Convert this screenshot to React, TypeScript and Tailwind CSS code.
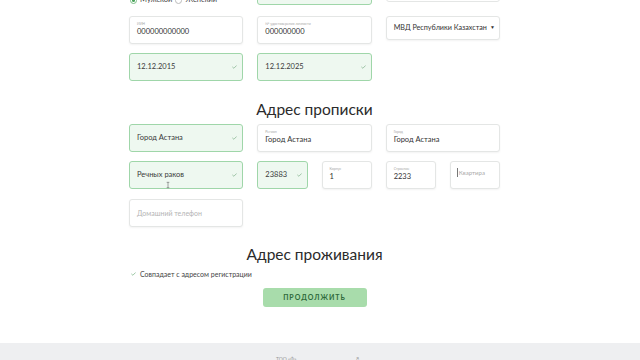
import React from "react";

type FieldProps = {
	label?: string;
	value?: string;
	placeholder?: string;
	green?: boolean;
	className?: string;
	children?: React.ReactNode;
};

function Check({ className = "" }: { className?: string }) {
	return (
		<svg viewBox="0 0 8 6" className={className} fill="none">
			<polyline points="1,3.2 3,5 7,1" stroke="currentColor" strokeWidth="1.1" strokeLinecap="round" strokeLinejoin="round" />
		</svg>
	);
}

function Field({ label, value, placeholder, green, className = "", children }: FieldProps) {
	if (green) {
		return (
			<div className={`relative h-[28px] rounded-[3px] border border-[#9fd6a9] bg-[#eef8f0] flex items-center pl-[7px] pr-[5px] ${className}`}>
				<span className="text-[7.5px] text-[#3a3a3a] flex-1 truncate">{value}</span>
				<Check className="w-[5px] h-[4px] text-[#7cae86]" />
				{children}
			</div>
		);
	}
	return (
		<div className={`relative h-[28px] rounded-[3px] border border-[#e4e6e5] bg-white shadow-[0_1px_2px_rgba(0,0,0,0.05)] flex flex-col justify-center pl-[7px] ${className}`}>
			{label && <span className="text-[3.5px] leading-[5px] text-[#a8a8a8] -mt-[2px]">{label}</span>}
			{value && <span className="text-[7.5px] leading-[10px] text-[#333]">{value}</span>}
			{placeholder && <span className="text-[7px] text-[#b4b4b4]">{placeholder}</span>}
			{children}
		</div>
	);
}

export default function App() {
	return (
		<div className="w-[640px] h-[360px] overflow-hidden bg-white font-['Lato',sans-serif] flex flex-col">
			<div className="w-[371px] ml-[129px] -mt-[23px] flex flex-col">
				{/* gender / document row */}
				<div className="grid grid-cols-6 gap-x-[14px] h-[28px]">
					<div className="col-span-2 flex items-end pb-[1px] pl-[1px] gap-[3px] text-[7.5px] leading-[8px] text-[#444]">
						<span className="w-[7px] h-[7px] rounded-full border border-[#7cbf88] flex items-center justify-center">
							<span className="w-[3px] h-[3px] rounded-full bg-[#4aa35b]" />
						</span>
						<span>Мужской</span>
						<span className="w-[7px] h-[7px] rounded-full border border-[#bbb]" />
						<span>Женский</span>
					</div>
					<Field green value="" className="col-span-2" />
					<div className="col-span-2 h-[25px] rounded-[3px] border border-[#e4e6e5] bg-white" />
				</div>

				<div className="grid grid-cols-6 gap-x-[14px] mt-[11px] items-start">
					<Field label="ИИН" value="000000000000" className="col-span-2" />
					<Field label="№ удостоверения личности" value="000000000" className="col-span-2" />
					<div className="col-span-2 h-[24px] rounded-[3px] border border-[#e4e6e5] bg-white shadow-[0_1px_2px_rgba(0,0,0,0.05)] flex items-center pl-[7px] pr-[4px]">
						<span className="flex-1 text-[7.2px] text-[#333] whitespace-nowrap">МВД Республики Казахстан</span>
						<span className="text-[5px] text-[#333]">▼</span>
					</div>
				</div>

				<div className="grid grid-cols-6 gap-x-[14px] mt-[9px]">
					<Field green value="12.12.2015" className="col-span-2" />
					<Field green value="12.12.2025" className="col-span-2" />
				</div>

				<h2 className="text-center text-[15.5px] leading-[20px] text-[#2b2b2b] mt-[18px] mb-[5px]">Адрес прописки</h2>

				<div className="grid grid-cols-6 gap-x-[14px] gap-y-[9px]">
					<Field green value="Город Астана" className="col-span-2" />
					<Field label="Регион" value="Город Астана" className="col-span-2" />
					<Field label="Город" value="Город Астана" className="col-span-2" />

					<Field green value="Речных раков" className="col-span-2">
						<svg viewBox="0 0 6 10" className="absolute left-[36px] top-[19px] w-[4px] h-[8px]" fill="none">
							<path d="M1 1h4M3 1v8M1 9h4" stroke="#555" strokeWidth="0.8" />
						</svg>
					</Field>
					<Field green value="23883" />
					<Field label="Корпус" value="1" />
					<Field label="Строение" value="2233" />
					<div className="relative h-[28px] rounded-[3px] border border-[#e4e6e5] bg-white shadow-[0_1px_2px_rgba(0,0,0,0.05)] pl-[6px] pt-[6px]">
						<span className="text-[6px] leading-[8px] text-[#aaa] flex items-center">
							<span className="w-px h-[9px] bg-[#777] mr-px" />
							Квартира
						</span>
					</div>

					<Field placeholder="Домашний телефон" className="col-span-2 mt-px" />
				</div>

				<h2 className="text-center text-[15.5px] leading-[20px] text-[#2b2b2b] mt-[17px]">Адрес проживания</h2>

				<div className="flex items-center gap-[4px] mt-[5px] pl-[2px] text-[7px] text-[#444]">
					<Check className="w-[5px] h-[4px] text-[#6fae7c]" />
					<span>Совпадает с адресом регистрации</span>
				</div>

				<div className="flex justify-center mt-[8px]">
					<button className="w-[104px] h-[19px] rounded-[3px] bg-[#a8dcab] text-[#2f6a3b] text-[7px] font-bold tracking-[1px] flex items-center justify-center">
						ПРОДОЛЖИТЬ
					</button>
				</div>
			</div>

			<div className="mt-auto h-[17px] bg-[#eeeff1] flex items-end">
				<div className="flex gap-[60px] ml-[276px] -mb-[3px] text-[5px] text-[#999]">
					<span>ТОО «Ф»</span>
					<span>8</span>
				</div>
			</div>
		</div>
	);
}
